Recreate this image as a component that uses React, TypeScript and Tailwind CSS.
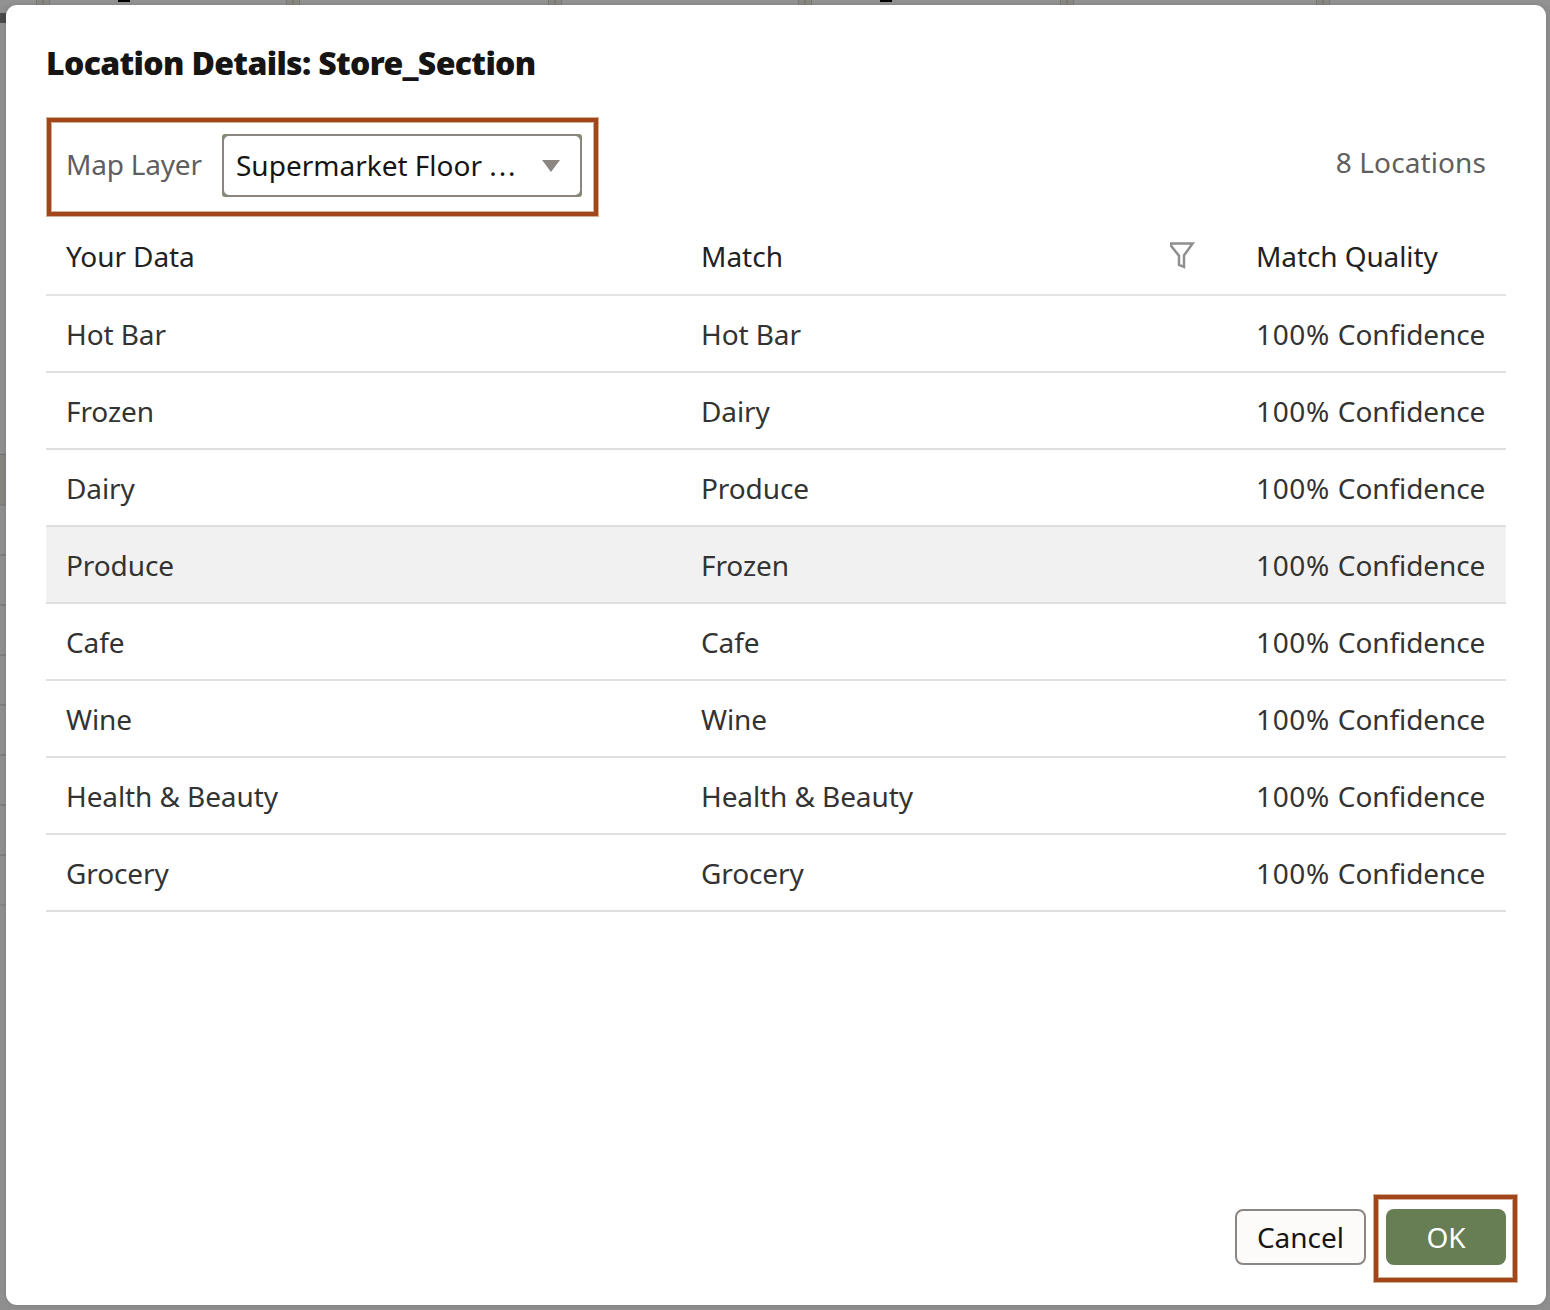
const rows = [
  { data: 'Hot Bar', match: 'Hot Bar' },
  { data: 'Frozen', match: 'Dairy' },
  { data: 'Dairy', match: 'Produce' },
  { data: 'Produce', match: 'Frozen', hovered: true },
  { data: 'Cafe', match: 'Cafe' },
  { data: 'Wine', match: 'Wine' },
  { data: 'Health & Beauty', match: 'Health & Beauty' },
  { data: 'Grocery', match: 'Grocery' },
];

const splitterGaps = ['w-[36px]', 'w-[236px]', 'w-[248px]', 'w-[236px]', 'w-[248px]', 'w-[242px]'];

const highlight =
  'border-4 border-[#a0461a] shadow-[0_0_0_1px_#d5ae95,inset_0_0_0_1px_#d5ae95]';

function Backdrop() {
  return (
    <div className="col-start-1 row-start-1 flex flex-col overflow-hidden bg-[#8f8f8f]">
      <div className="flex h-[5px] w-full shrink-0 bg-[#929292]">
        {splitterGaps.map((gap, i) => (
          <div key={i} className="flex shrink-0">
            <div className={`${gap} flex shrink-0`}>
              {(i === 1 || i === 4) && <div className="ml-[68px] h-[2px] w-[12px] bg-black" />}
            </div>
            <div className="flex w-[14px] justify-center border-x border-[#777773] bg-[#8a8984]">
              <div className="w-[2px] bg-[#7c7b78]" />
            </div>
          </div>
        ))}
      </div>
      <div className="mt-[8px] h-[10px] w-[6px] shrink-0 bg-[#4a4a4a]" />
      <div className="mt-[431px] h-[50px] w-[6px] shrink-0 border-t border-[#6e6e6e] bg-[#868580]" />
      {rows.map((row) => (
        <div key={row.data} className="h-[50px] w-[6px] shrink-0 border-t-2 border-[#7e7e7e]" />
      ))}
      <div className="h-[2px] w-[6px] shrink-0 bg-[#868686]" />
    </div>
  );
}

function FilterIcon() {
  return (
    <svg
      width="26"
      height="28"
      viewBox="0 0 26 28"
      fill="none"
      stroke="#8f8f8f"
      strokeWidth="2.5"
    >
      <path d="M1.2 1.6H22.6L14 13.4V24.9L9 22.8V13.8L1.2 4Z" />
    </svg>
  );
}

const columns = 'grid grid-cols-[635px_555px_270px] items-center';

export default function App() {
  return (
    <div className="grid h-[1310px] w-[1550px] grid-cols-1 grid-rows-1 overflow-hidden font-['Noto_Sans','Open_Sans',sans-serif] text-[28px] leading-[38px]">
      <Backdrop />
      <main className="col-start-1 row-start-1 mt-[5px] mr-[4px] mb-[5px] ml-[6px] flex flex-col rounded-[11px] bg-white pl-[40px] pr-[29px] shadow-[0_0_5px_rgba(0,0,0,0.12)]">
        <h1 className="mt-[36px] h-[45px] text-[32px] font-black leading-[44px] tracking-[-0.67px] whitespace-nowrap text-[#161513]">
          Location Details: Store_Section
        </h1>

        <div className="mt-[32px] mr-[11px] flex h-[98px] items-start justify-between">
          <div className={`${highlight} ml-px flex h-[98px] w-[551px] pl-[15px]`}>
            <label className="mt-[23px] w-[156px] tracking-[-0.2px] whitespace-nowrap text-[#5f5f5f]">
              Map Layer
            </label>
            <div className="mt-[12px] h-[63px] w-[360px] rounded-[3px] bg-[#7d9169]">
              <div className="flex h-full items-center justify-between rounded-[7px] border-2 border-[#8b8681] bg-white pr-[20px] pl-[12px] text-[#161513]">
                <span className="-mt-[2px] flex whitespace-pre">
                  <span>Supermarket Floor </span>
                  <span className="tracking-[1.8px]">...</span>
                </span>
                <svg width="18" height="12" viewBox="0 0 18 12" fill="#8b8681">
                  <path d="M0 0H18L9 12Z" />
                </svg>
              </div>
            </div>
          </div>
          <span className="mt-[25px] mr-[20px] tracking-[0.1px] whitespace-nowrap text-[#5f5f5f]">
            8 Locations
          </span>
        </div>

        <div className="mr-[11px]">
          <div className={`${columns} h-[80px] border-b-2 border-[#e4e4e4] pt-[2px] text-[#222222]`}>
            <div className="pl-[20px] tracking-[-0.1px]">Your Data</div>
            <div className="flex items-center justify-between pr-[40px] pl-[20px]">
              <span>Match</span>
              <FilterIcon />
            </div>
            <div className="pl-[20px] tracking-[-0.1px]">Match Quality</div>
          </div>
          {rows.map((row) => (
            <div
              key={row.data}
              className={`${columns} h-[77px] border-b-2 border-[#dfdfdf] tracking-[-0.1px] text-[#333333] ${row.hovered ? 'bg-[#f1f1f1]' : ''}`}
            >
              <div className="pl-[20px]">{row.data}</div>
              <div className="pl-[20px]">{row.match}</div>
              <div className="pl-[20px] whitespace-nowrap">
                <span className="tracking-[0.65px]">100% </span>Confidence
              </div>
            </div>
          ))}
        </div>

        <div className="mt-auto mb-[23px] flex h-[87px] items-start justify-end gap-[8px]">
          <button className="mt-[14px] h-[56px] w-[131px] rounded-[8px] border-2 border-[#8b8681] bg-[#fcfbfa] text-[#161513]">
            Cancel
          </button>
          <div className={`${highlight} h-[87px] w-[143px] pt-[10px] pl-[8px]`}>
            <button className="h-[56px] w-[120px] rounded-[8px] bg-[#677d54] text-white">OK</button>
          </div>
        </div>
      </main>
    </div>
  );
}
